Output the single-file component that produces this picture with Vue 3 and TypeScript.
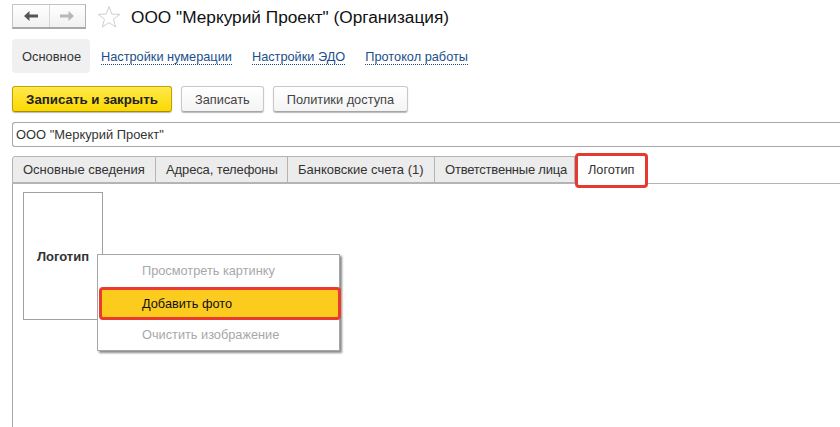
<script setup lang="ts">
const links: string[] = ['Настройки нумерации', 'Настройки ЭДО', 'Протокол работы']
const tabs: string[] = ['Основные сведения', 'Адреса, телефоны', 'Банковские счета (1)', 'Ответственные лица']
</script>

<template>
  <div class="page">
    <header class="head">
      <div class="nav">
        <button class="nav-btn">
          <svg width="16" height="12" viewBox="0 0 16 12"><path d="M1 6 L6.5 1 V4.5 H15 V7.5 H6.5 V11 Z" fill="#555"/></svg>
        </button>
        <button class="nav-btn second">
          <svg width="16" height="12" viewBox="0 0 16 12"><path d="M15 6 L9.5 1 V4.5 H1 V7.5 H9.5 V11 Z" fill="#b8b8b8"/></svg>
        </button>
      </div>
      <svg class="star" width="24" height="24" viewBox="0 0 24 24"><path d="M12 1.5 L14.8 9 L22.8 9.4 L16.5 14.3 L18.7 22 L12 17.6 L5.3 22 L7.5 14.3 L1.2 9.4 L9.2 9 Z" fill="#fff" stroke="#cfcfcf" stroke-width="1"/></svg>
      <h1 class="title">ООО "Меркурий Проект" (Организация)</h1>
    </header>

    <nav class="sections">
      <span class="section-active">Основное</span>
      <a v-for="l in links" :key="l" class="link">{{ l }}</a>
    </nav>

    <div class="toolbar">
      <button class="btn primary">Записать и закрыть</button>
      <button class="btn">Записать</button>
      <button class="btn">Политики доступа</button>
    </div>

    <div class="field">ООО "Меркурий Проект"</div>

    <div class="tabs">
      <span v-for="t in tabs" :key="t" class="tab">{{ t }}</span>
      <span class="tab active">Логотип</span>
    </div>

    <section class="panel">
      <div class="logo">Логотип</div>
      <ul class="menu">
        <li class="item off">Просмотреть картинку</li>
        <li class="item on">Добавить фото</li>
        <li class="item off last">Очистить изображение</li>
      </ul>
    </section>
  </div>
</template>

<style>
html, body { margin: 0; background: #fff; overflow: hidden; }
</style>

<style scoped>
.page {
  width: 840px;
  height: 427px;
  overflow: hidden;
  display: flex;
  flex-direction: column;
  font-family: "Liberation Sans", Arial, sans-serif;
  font-size: 13px;
  color: #333;
  box-sizing: border-box;
  padding: 4px 0 0 12px;
}
.head { display: flex; align-items: center; height: 25px; }
.nav {
  display: flex;
  width: 74px;
  height: 25px;
  box-sizing: border-box;
  border: 1px solid #c4c4c4;
  border-bottom: 2px solid #a8a8a8;
  border-right-color: #b0b0b0;
  background: linear-gradient(#fff, #f1f1f1);
}
.nav-btn {
  flex: 1;
  padding: 0;
  border: 0;
  background: none;
  display: flex;
  align-items: center;
  justify-content: center;
}
.second { border-left: 1px solid #d6d6d6; }
.star { margin-left: 11px; flex: none; }
.title { margin: 2px 0 0 10px; font-size: 17.25px; font-weight: 400; color: #111; white-space: nowrap; }
.sections { display: flex; align-items: center; height: 34px; margin-top: 10px; }
.section-active {
  width: 78px;
  height: 34px;
  box-sizing: border-box;
  padding: 1px 0 0 10px;
  line-height: 34px;
  font-size: 12.9px;
  background: #f0f0f0;
  border-radius: 4px;
  margin-right: 11px;
}
.link {
  color: #1a4f8b;
  font-size: 12.75px;
  border-bottom: 1px dotted #1a4f8b;
  line-height: 14px;
  margin: 2px 20px 0 0;
}
.toolbar { display: flex; gap: 9px; margin-top: 13px; height: 26px; }
.btn {
  height: 26px;
  box-sizing: border-box;
  padding: 0 13px;
  font: inherit;
  font-size: 12.8px;
  color: #444;
  background: linear-gradient(#fff, #f4f4f4);
  border: 1px solid #c8c8c8;
  border-bottom-color: #a6a6a6;
  border-radius: 3px;
  box-shadow: 0 1px 1px #bbb;
}
.primary {
  width: 160px;
  padding: 0;
  font-weight: 700;
  font-size: 13.3px;
  color: #222;
  background: linear-gradient(#ffe94d, #fcd800);
  border-color: #c0a300;
  border-bottom-color: #a58d00;
}
.field {
  margin-top: 10px;
  height: 25px;
  line-height: 23px;
  box-sizing: border-box;
  width: 840px;
  padding-left: 3px;
  font-size: 12.9px;
  border: 1px solid #a8a8a8;
  border-right: 0;
  border-radius: 3px 0 0 3px;
  color: #333;
}
.tabs { display: flex; margin-top: 9px; height: 28px; position: relative; z-index: 1; }
.tab {
  flex: none;
  height: 27px;
  line-height: 26px;
  box-sizing: border-box;
  padding: 0 0 0 10px;
  background: #ececec;
  border: 1px solid #b4b4b4;
  border-left-width: 0;
  white-space: nowrap;
}
.tab:nth-child(1) { width: 144px; border-left-width: 1px; border-radius: 3px 0 0 0; }
.tab:nth-child(2) { width: 132px; letter-spacing: -0.12px; }
.tab:nth-child(3) { width: 147px; }
.tab:nth-child(4) { width: 140px; letter-spacing: -0.22px; }
.tab.active {
  width: 73px;
  height: 35px;
  line-height: 28px;
  margin: -3px 0 0 0;
  padding: 0 0 0 10px;
  font-size: 12.75px;
  background: #fff;
  border: 3px solid #e53a30;
  border-radius: 4px;
}
.panel {
  flex: 1;
  position: relative;
  margin-top: -1px;
  border-top: 1px solid #b4b4b4;
  border-left: 1px solid #a8a8a8;
}
.logo {
  position: absolute;
  left: 10px;
  top: 8px;
  width: 80px;
  height: 128px;
  box-sizing: border-box;
  border: 1px solid #a0a0a0;
  display: flex;
  align-items: center;
  justify-content: center;
  font-weight: 700;
  color: #333;
}
.menu {
  position: absolute;
  left: 84px;
  top: 70px;
  width: 243px;
  height: 97px;
  box-sizing: border-box;
  margin: 0;
  padding: 0;
  list-style: none;
  background: #fff;
  border: 1px solid #a6a6a6;
  box-shadow: 2px 2px 2px #8c8c8c;
  display: flex;
  flex-direction: column;
}
.item { height: 32px; line-height: 32px; padding-left: 44px; flex: none; box-sizing: border-box; font-size: 12.75px; }
.last { line-height: 30px; }
.off { color: #a8a8a8; }
.on {
  height: 33px;
  line-height: 27px;
  padding-left: 40px;
  margin-left: 1px;
  background: #fbcc1e;
  border: 3px solid #e93b2f;
  border-radius: 4px;
  color: #111;
  width: 242px;
}
</style>
